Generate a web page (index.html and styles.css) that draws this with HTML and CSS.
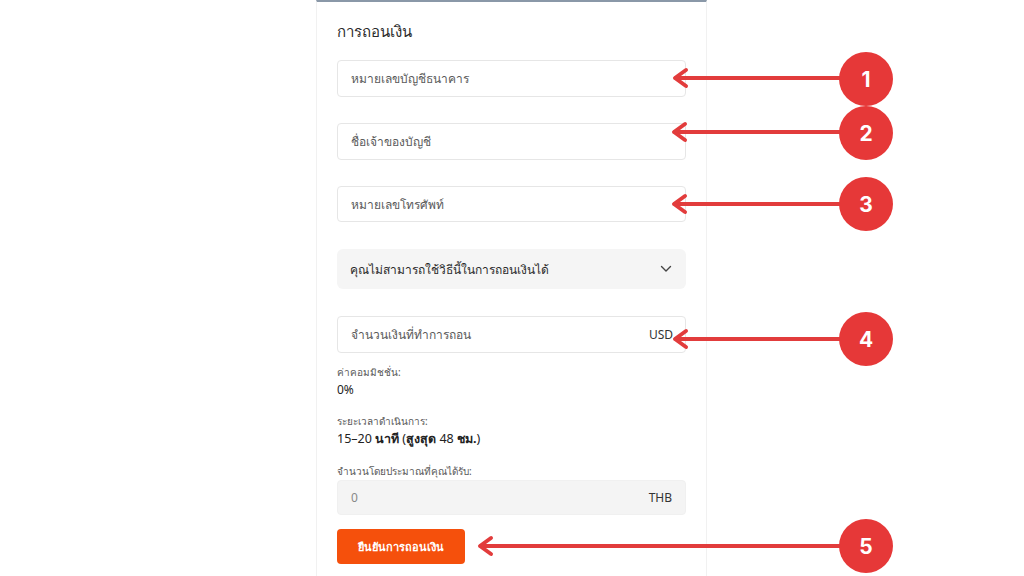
FILE: index.html
```html
<!DOCTYPE html>
<html lang="th">
<head>
<meta charset="utf-8">
<title>การถอนเงิน</title>
<link rel="stylesheet" href="styles.css">
</head>
<body>
<div class="page">
  <main class="panel">
    <h1 class="title">การถอนเงิน</h1>
    <div class="field f1"><span class="ph">หมายเลขบัญชีธนาคาร</span></div>
    <div class="field f2"><span class="ph">ชื่อเจ้าของบัญชี</span></div>
    <div class="field f3"><span class="ph">หมายเลขโทรศัพท์</span></div>
    <div class="select">
      <span>คุณไม่สามารถใช้วิธีนี้ในการถอนเงินได้</span>
      <svg class="chev" width="12" height="8" viewBox="0 0 12 8"><path d="M1.5 1.5 L6 6 L10.5 1.5" fill="none" stroke="#444" stroke-width="1.4" stroke-linecap="round" stroke-linejoin="round"/></svg>
    </div>
    <div class="field f4"><span class="ph">จำนวนเงินที่ทำการถอน</span><span class="unit">USD</span></div>
    <div class="info">
      <div class="label">ค่าคอมมิชชั่น:</div>
      <div class="value">0%</div>
    </div>
    <div class="info second">
      <div class="label">ระยะเวลาดำเนินการ:</div>
      <div class="value big">15–20 <b>นาที</b> (<b>สูงสุด</b> 48 <b>ชม.</b>)</div>
    </div>
    <div class="label third">จำนวนโดยประมาณที่คุณได้รับ:</div>
    <div class="field readonly"><span class="zero">0</span><span class="unit">THB</span></div>
    <button class="submit">ยืนยันการถอนเงิน</button>
  </main>
</div>
<svg class="overlay" width="1024" height="576" viewBox="0 0 1024 576">
  <g stroke="#e23c3c" stroke-width="4" fill="none" stroke-linecap="round" stroke-linejoin="round">
    <line x1="676" y1="78" x2="845" y2="78"/>
    <polyline points="686,70 675,78 686,86"/>
    <line x1="675" y1="132" x2="845" y2="132"/>
    <polyline points="685,124 674,132 685,140"/>
    <line x1="675" y1="204" x2="845" y2="204"/>
    <polyline points="685,196 674,204 685,212"/>
    <line x1="676" y1="339" x2="845" y2="339"/>
    <polyline points="686,331 675,339 686,347"/>
    <line x1="481" y1="546" x2="845" y2="546"/>
    <polyline points="491,538 480,546 491,554"/>
  </g>
  <g fill="#e63838">
    <circle cx="866" cy="79" r="27"/>
    <circle cx="866" cy="133" r="27"/>
    <circle cx="866" cy="204" r="27"/>
    <circle cx="866" cy="339" r="27"/>
    <circle cx="866" cy="546" r="27"/>
  </g>
  <g class="num" fill="#fff" text-anchor="middle">
    <text x="866" y="87">1</text>
    <text x="866" y="141">2</text>
    <text x="866" y="212">3</text>
    <text x="866" y="347">4</text>
    <text x="866" y="554">5</text>
  </g>
</svg>
</body>
</html>
```
FILE: styles.css
```css
* { box-sizing: border-box; }
html, body { margin: 0; padding: 0; background: #fff; }
body {
  width: 1024px;
  height: 576px;
  overflow: hidden;
  font-family: "Noto Sans", "Open Sans", sans-serif;
  color: #333;
  position: relative;
}
.page {
  display: flex;
  justify-content: flex-start;
  padding-left: 316px;
  height: 576px;
}
.panel {
  width: 391px;
  height: 576px;
  border-top: 2px solid #8a98a8;
  border-left: 1px solid #f1f1f1;
  border-right: 1px solid #f1f1f1;
  padding: 18px 20px 0 20px;
  display: flex;
  flex-direction: column;
}
.title {
  margin: 0;
  font-size: 15px;
  font-weight: 400;
  line-height: 22px;
  color: #2b2b2b;
}
.field {
  height: 37px;
  border: 1px solid #e6e6e6;
  border-radius: 4px;
  display: flex;
  align-items: center;
  justify-content: space-between;
  padding: 0 13px 0 13px;
  font-size: 12px;
  flex-shrink: 0;
}
.f1 { margin-top: 18px; }
.f2 { margin-top: 26px; }
.f3 { margin-top: 26px; height: 36px; }
.ph { color: #5a5a5a; }
.select {
  margin-top: 27px;
  height: 40px;
  background: #f5f5f5;
  border-radius: 6px;
  display: flex;
  align-items: center;
  justify-content: space-between;
  padding: 0 14px 0 13px;
  font-size: 12px;
  color: #2b2b2b;
  flex-shrink: 0;
}
.f4 { margin-top: 27px; }
.unit { color: #333; font-size: 12px; }
.f4 .unit { margin-right: -1px; }
.info { margin-top: 12px; }
.info.second { margin-top: 16px; }
.label {
  font-size: 10px;
  line-height: 14px;
  color: #595959;
}
.value {
  margin-top: 3px;
  font-size: 12px;
  line-height: 16px;
  color: #222;
}
.value.big { font-size: 12.5px; }
.value b { font-weight: 700; }
.label.third { margin-top: 17px; }
.readonly {
  margin-top: 2px;
  height: 35px;
  background: #f4f4f4;
  border-color: #f0f0f0;
}
.zero { color: #888; }
.submit {
  margin-top: 14px;
  width: 128px;
  height: 35px;
  border: none;
  border-radius: 4px;
  background: #f5500c;
  color: #fff;
  font-family: inherit;
  font-size: 11px;
  font-weight: 700;
  padding: 0;
  align-self: flex-start;
}
.overlay {
  position: absolute;
  left: 0;
  top: 0;
}
.num text {
  font-family: "Inter", "Noto Sans", sans-serif;
  font-size: 21px;
  font-weight: 700;
}
```
